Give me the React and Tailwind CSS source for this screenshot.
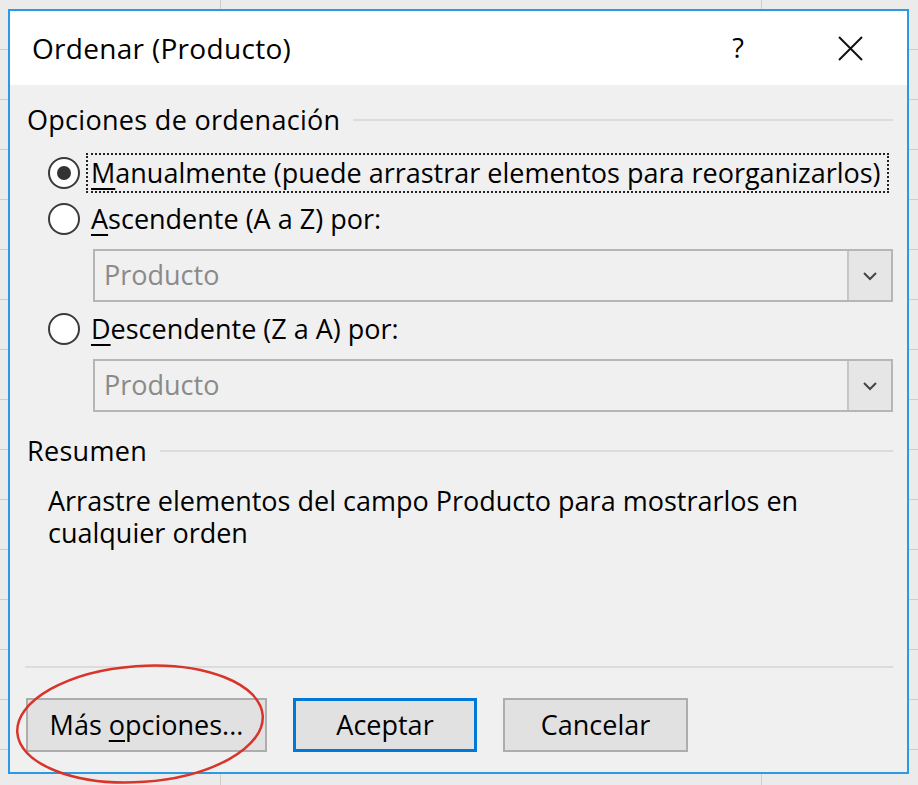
import React from 'react';

// Windows-style "Ordenar" dialog over a spreadsheet grid

function Radio({ checked }) {
  return (
    <div className="w-[32px] h-[32px] shrink-0 rounded-full border-2 border-[#3a3a3a] bg-white flex items-center justify-center">
      {checked && <div className="w-[14px] h-[14px] rounded-full bg-[#333]" />}
    </div>
  );
}

function Combo({ value }) {
  return (
    <div className="ml-[66px] h-[53px] border-2 border-[#b6b6b6] flex">
      <div className="flex-1 flex items-center pl-[9px] text-[#8a8a8a]">{value}</div>
      <div className="w-[44px] bg-[#e6e6e6] border-l-2 border-[#c6c6c6] flex items-center justify-center">
        <svg width="16" height="10" viewBox="0 0 16 10">
          <path d="M2 2 L8 8 L14 2" fill="none" stroke="#454545" strokeWidth="2" />
        </svg>
      </div>
    </div>
  );
}

function GroupHeading({ label, className }) {
  return (
    <div className={`h-[34px] flex items-center ${className}`}>
      <span className="tracking-[0.3px]">{label}</span>
      <div className="flex-1 h-[2px] bg-[#dcdcdc] ml-[13px]" />
    </div>
  );
}

function Button({ children, primary, className }) {
  return (
    <div
      className={`h-[54px] flex items-center justify-center bg-[#e1e1e1] ${
        primary ? 'border-[3px] border-[#0078d7]' : 'border-2 border-[#adadad]'
      } ${className}`}
    >
      {children}
    </div>
  );
}

export default function App() {
  return (
    <div className="relative w-[918px] h-[785px] overflow-hidden pt-[9px] pl-[8px] bg-[#ebebeb] bg-[linear-gradient(to_right,transparent_220px,#cdcdcd_220px,#cdcdcd_221px,transparent_221px,transparent_761px,#cdcdcd_761px,#cdcdcd_762px,transparent_762px),linear-gradient(to_bottom,transparent_49px,#cdcdcd_49px)] bg-[size:100%_100%,100%_50px] font-['Open_Sans','Noto_Sans',sans-serif] text-[27px] text-black">
      <div className="w-[901px] h-[765px] border-2 border-[#2a9be3] bg-[#f0f0f0] flex flex-col">
        {/* title bar */}
        <div className="h-[74px] bg-white flex items-center pl-[22px] pr-[44px]">
          <span className="text-[28px] tracking-[0.3px]">Ordenar (Producto)</span>
          <span className="ml-auto">?</span>
          <svg className="ml-[94px]" width="25" height="25" viewBox="0 0 25 25">
            <path d="M1 1 L24 24 M24 1 L1 24" stroke="#111" strokeWidth="2" />
          </svg>
        </div>

        {/* body */}
        <div className="flex-1 flex flex-col pl-[17px] pr-[14px] pb-[20px]">
          <GroupHeading label="Opciones de ordenación" className="mt-[18px]" />

          <div className="mt-[16px] h-[40px] flex items-center pl-[21px]">
            <Radio checked />
            <div className="ml-[6px] h-[40px] flex items-center border-2 border-dotted border-[#222] pl-[3px] pr-[6px] whitespace-nowrap">
              <span>
                <span className="underline underline-offset-[5px] decoration-2">M</span>anualmente (puede arrastrar elementos para reorganizarlos)
              </span>
            </div>
          </div>

          <div className="mt-[6px] h-[40px] flex items-center pl-[21px]">
            <Radio />
            <span className="ml-[11px]">
              <span className="underline underline-offset-[5px] decoration-2">A</span>scendente (A a Z) por:
            </span>
          </div>

          <div className="mt-[10px]">
            <Combo value="Producto" />
          </div>

          <div className="mt-[7px] h-[40px] flex items-center pl-[21px]">
            <Radio />
            <span className="ml-[11px]">
              <span className="underline underline-offset-[5px] decoration-2">D</span>escendente (Z a A) por:
            </span>
          </div>

          <div className="mt-[10px]">
            <Combo value="Producto" />
          </div>

          <GroupHeading label="Resumen" className="mt-[22px]" />

          <p className="mt-[17px] pl-[21px] leading-[32px] w-[800px]">
            Arrastre elementos del campo Producto para mostrarlos en cualquier orden
          </p>

          <div className="flex-1" />
          <div className="h-[2px] bg-[#dcdcdc] -ml-[2px]" />

          <div className="mt-[30px] flex -ml-[1px]">
            <Button className="w-[241px]">
              <span>
                Más <span className="underline underline-offset-[5px] decoration-2">o</span>pciones...
              </span>
            </Button>
            <Button primary className="w-[184px] ml-[26px]">Aceptar</Button>
            <Button className="w-[185px] ml-[26px]">Cancelar</Button>
          </div>
        </div>
      </div>

      {/* red annotation ellipse */}
      <svg className="absolute left-0 top-0 pointer-events-none" width="918" height="785" viewBox="0 0 918 785">
        <ellipse cx="140" cy="724" rx="123" ry="58" transform="rotate(-4 140 724)" fill="none" stroke="#d8342a" strokeWidth="2.5" />
      </svg>
    </div>
  );
}
